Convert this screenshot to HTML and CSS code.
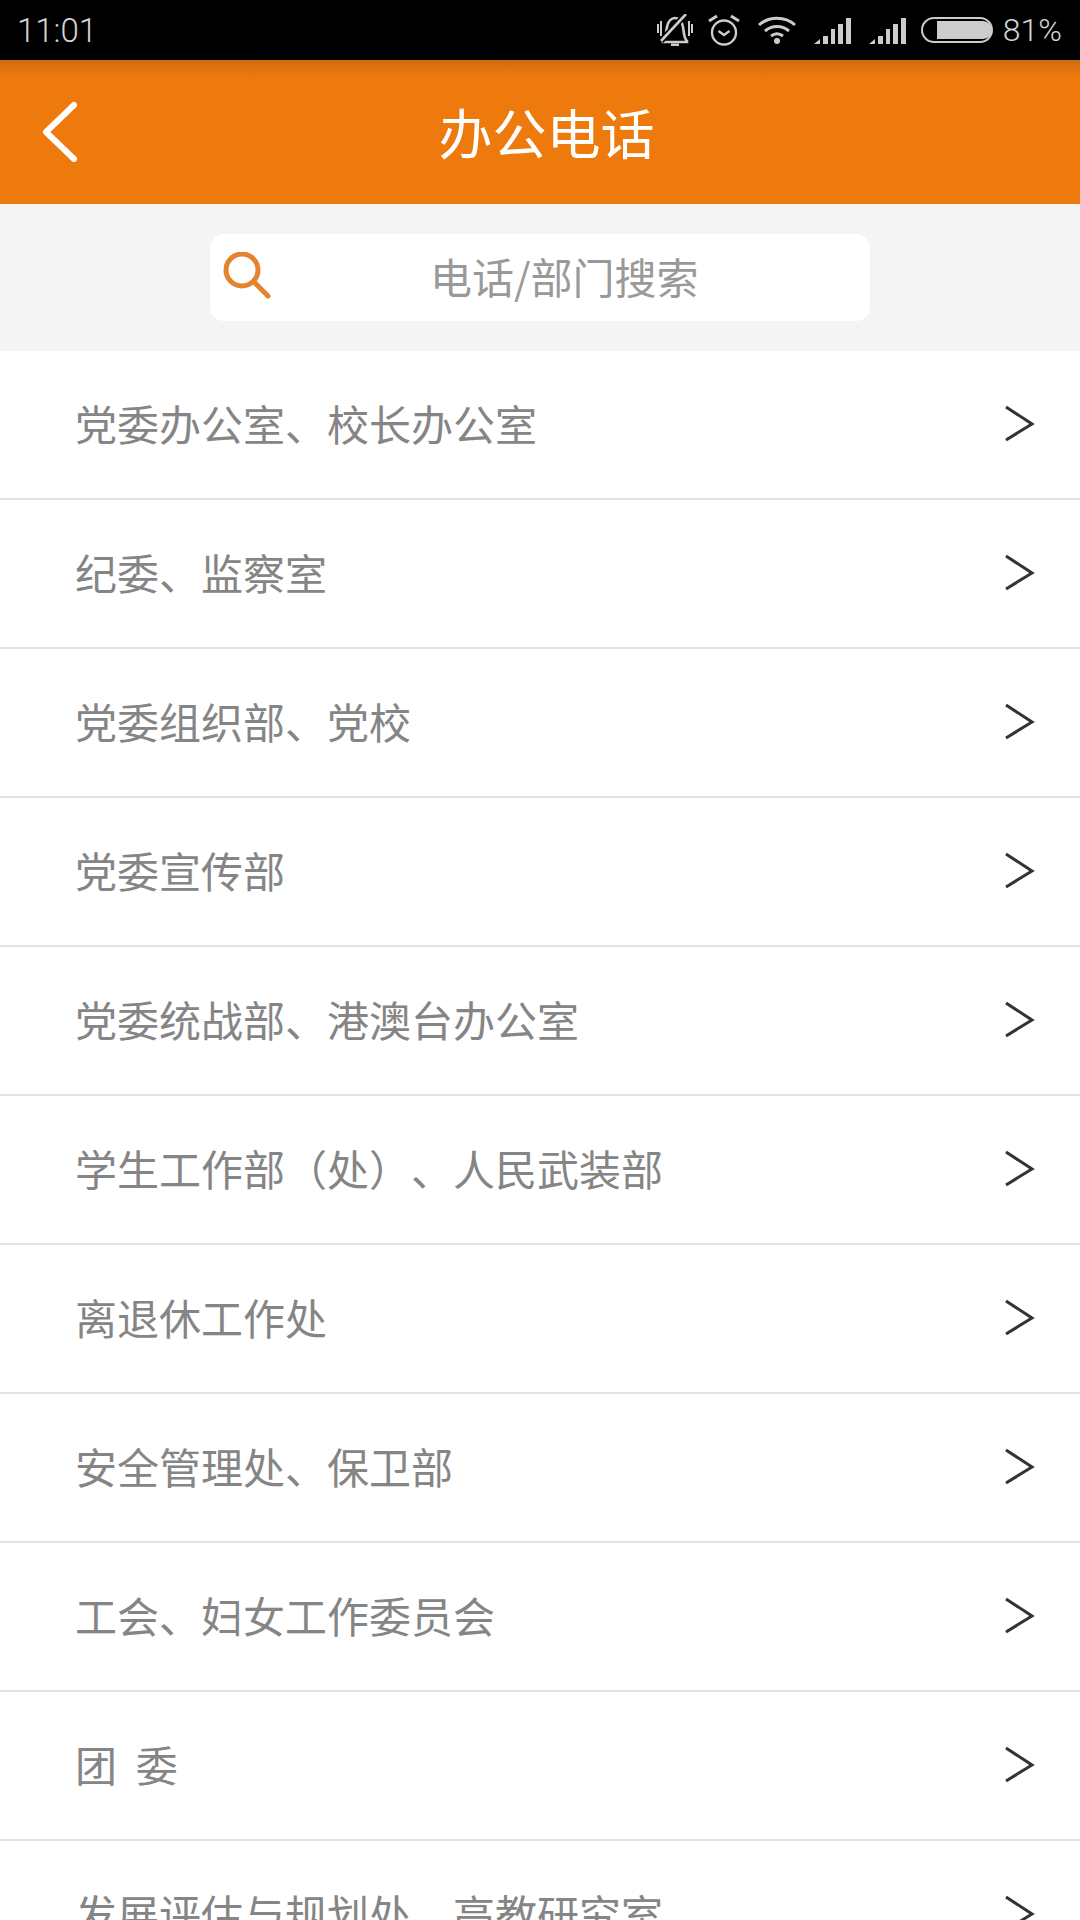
FILE: index.html
```html
<!DOCTYPE html>
<html lang="zh-CN">
<head>
    <meta charset="UTF-8">
    <meta name="viewport" content="width=device-width, initial-scale=1.0">
    <title>办公电话</title>
    <link rel="stylesheet" href="styles.css">
</head>
<body>
    <div class="status-bar">
        <span class="status-time">11:01</span>
        <div class="status-icons">
            <svg class="icon-mute" width="36" height="32" viewBox="0 0 36 32" fill="none" stroke="#ccc" stroke-width="2.6"><path d="M6 27c3-2 3-8 4-14 1-5 4-9 8-9s7 4 8 9c1 6 1 12 4 14v1H6z"/><path d="M14 31h8" stroke-width="3"/><path d="M1 10v9M4 7v15M32 7v15M35 10v9" stroke-width="2"/><path d="M29 0 4 27" stroke="#000" stroke-width="6"/><path d="M29 0 4 27"/></svg>
            <svg class="icon-alarm" width="32" height="32" viewBox="0 0 32 32" fill="none" stroke="#ccc" stroke-width="2.4"><circle cx="16" cy="18.5" r="12"/><path d="M10.5 17l5.500 4 5.500-4"/><path d="M1 7l8-5M31 7l-8-5" stroke-width="3"/></svg>
            <svg class="icon-wifi" width="38" height="28" viewBox="0 0 38 28" fill="none" stroke="#ccc" stroke-width="3"><path d="M1 9c10-9 26-9 36 0"/><path d="M7 15c7-6 17-6 24 0"/><path d="M13 20c4-3 8-3 12 0"/><circle cx="19" cy="25" r="3" fill="#ccc" stroke="none"/></svg>
            <svg class="icon-signal" width="37" height="26" viewBox="0 0 37 26" fill="#ccc"><path d="M0 26l6-5v5zM9 18h5v8H9zM17 11h4v15h-4zM24 6h5v20h-5zM32 0h5v26h-5z"/></svg>
            <svg class="icon-signal" width="37" height="26" viewBox="0 0 37 26" fill="#ccc"><path d="M0 26l6-5v5zM9 18h5v8H9zM17 11h4v15h-4zM24 6h5v20h-5zM32 0h5v26h-5z"/></svg>
            <svg class="icon-battery" width="72" height="26" viewBox="0 0 72 26"><rect x="1" y="1" width="70" height="24" rx="12" fill="none" stroke="#ccc" stroke-width="2"/><path d="M16 4h46a9 9 0 0 1 0 18H16z" fill="#ccc"/></svg>
            <span class="status-percent">81%</span>
        </div>
    </div>

    <header class="app-header">
        <svg class="back-icon" width="38" height="62" viewBox="0 0 38 62" fill="none" stroke="#fff" stroke-width="6" stroke-linecap="round" stroke-linejoin="round"><path d="M33 5 5 32l28 27"/></svg>
        <h1>办公电话</h1>
    </header>

    <div class="search-band">
        <div class="search-box">
            <svg class="search-icon" width="48" height="48" viewBox="0 0 48 48" fill="none" stroke="#e5832e" stroke-width="5" stroke-linecap="round"><circle cx="19" cy="18" r="16"/><path d="M31 30l14 14"/></svg>
            <span class="search-text">电话/部门搜索</span>
        </div>
    </div>

    <ul class="dept-list">
        <li>党委办公室、校长办公室<svg class="arrow" width="30" height="38" viewBox="0 0 30 38"><path d="M1 2l26 17L1 35" fill="none" stroke="#333" stroke-width="3"/></svg></li>
        <li>纪委、监察室<svg class="arrow" width="30" height="38" viewBox="0 0 30 38"><path d="M1 2l26 17L1 35" fill="none" stroke="#333" stroke-width="3"/></svg></li>
        <li>党委组织部、党校<svg class="arrow" width="30" height="38" viewBox="0 0 30 38"><path d="M1 2l26 17L1 35" fill="none" stroke="#333" stroke-width="3"/></svg></li>
        <li>党委宣传部<svg class="arrow" width="30" height="38" viewBox="0 0 30 38"><path d="M1 2l26 17L1 35" fill="none" stroke="#333" stroke-width="3"/></svg></li>
        <li>党委统战部、港澳台办公室<svg class="arrow" width="30" height="38" viewBox="0 0 30 38"><path d="M1 2l26 17L1 35" fill="none" stroke="#333" stroke-width="3"/></svg></li>
        <li>学生工作部（处）、人民武装部<svg class="arrow" width="30" height="38" viewBox="0 0 30 38"><path d="M1 2l26 17L1 35" fill="none" stroke="#333" stroke-width="3"/></svg></li>
        <li>离退休工作处<svg class="arrow" width="30" height="38" viewBox="0 0 30 38"><path d="M1 2l26 17L1 35" fill="none" stroke="#333" stroke-width="3"/></svg></li>
        <li>安全管理处、保卫部<svg class="arrow" width="30" height="38" viewBox="0 0 30 38"><path d="M1 2l26 17L1 35" fill="none" stroke="#333" stroke-width="3"/></svg></li>
        <li>工会、妇女工作委员会<svg class="arrow" width="30" height="38" viewBox="0 0 30 38"><path d="M1 2l26 17L1 35" fill="none" stroke="#333" stroke-width="3"/></svg></li>
        <li>团&nbsp;&nbsp;委<svg class="arrow" width="30" height="38" viewBox="0 0 30 38"><path d="M1 2l26 17L1 35" fill="none" stroke="#333" stroke-width="3"/></svg></li>
        <li>发展评估与规划处、高教研究室<svg class="arrow" width="30" height="38" viewBox="0 0 30 38"><path d="M1 2l26 17L1 35" fill="none" stroke="#333" stroke-width="3"/></svg></li>
    </ul>
</body>
</html>
```

FILE: styles.css
```css
html, body {
    height: 1920px;
    overflow: hidden;
}
body {
    margin: 0;
    font-family: "Noto Sans CJK SC", "Noto Sans", sans-serif;
    background-color: white;
    text-spacing-trim: space-all;
}
.status-bar {
    height: 60px;
    background-color: black;
    color: #d4d4d4;
    display: flex;
    align-items: center;
    justify-content: space-between;
    padding: 0 18px 0 17px;
    box-sizing: border-box;
}
.status-time {
    font-family: Roboto, sans-serif;
    font-size: 33px;
    font-weight: 300;
}
.status-icons {
    display: flex;
    align-items: center;
}
.icon-mute {
    margin-right: 15px;
}
.icon-alarm {
    margin-right: 18px;
}
.icon-wifi {
    margin-right: 18px;
}
.icon-signal {
    margin-right: 18px;
    margin-top: 1px;
}
.icon-battery {
    margin-right: 10px;
    margin-left: -3px;
}
.status-percent {
    font-family: Roboto, sans-serif;
    font-size: 32px;
    font-weight: 300;
}
.app-header {
    height: 144px;
    background: linear-gradient(to bottom, #cf6c10, #ee7a0e 18px);
    display: flex;
    align-items: center;
    justify-content: center;
    position: relative;
}
.app-header h1 {
    margin: 0 0 2px 13px;
    font-size: 54px;
    font-weight: 400;
    color: white;
}
.back-icon {
    position: absolute;
    left: 41px;
    top: 40px;
}
.search-band {
    height: 147px;
    background-color: #f4f4f4;
    display: flex;
    align-items: center;
    justify-content: center;
}
.search-box {
    width: 660px;
    height: 87px;
    background-color: white;
    border-radius: 14px;
    display: flex;
    align-items: center;
    position: relative;
}
.search-icon {
    position: absolute;
    left: 13px;
    top: 18px;
}
.search-text {
    margin-left: 220px;
    font-size: 42px;
    color: #999;
    margin-top: -4px;
}
.dept-list {
    list-style: none;
    margin: 0;
    padding: 0;
}
.dept-list li {
    height: 149px;
    box-sizing: border-box;
    border-bottom: 2px solid #e2e2e2;
    padding: 0 45px 4px 75px;
    display: flex;
    align-items: center;
    justify-content: space-between;
    font-size: 42px;
    color: #858585;
}
.arrow {
    margin-top: 2px;
}
```
